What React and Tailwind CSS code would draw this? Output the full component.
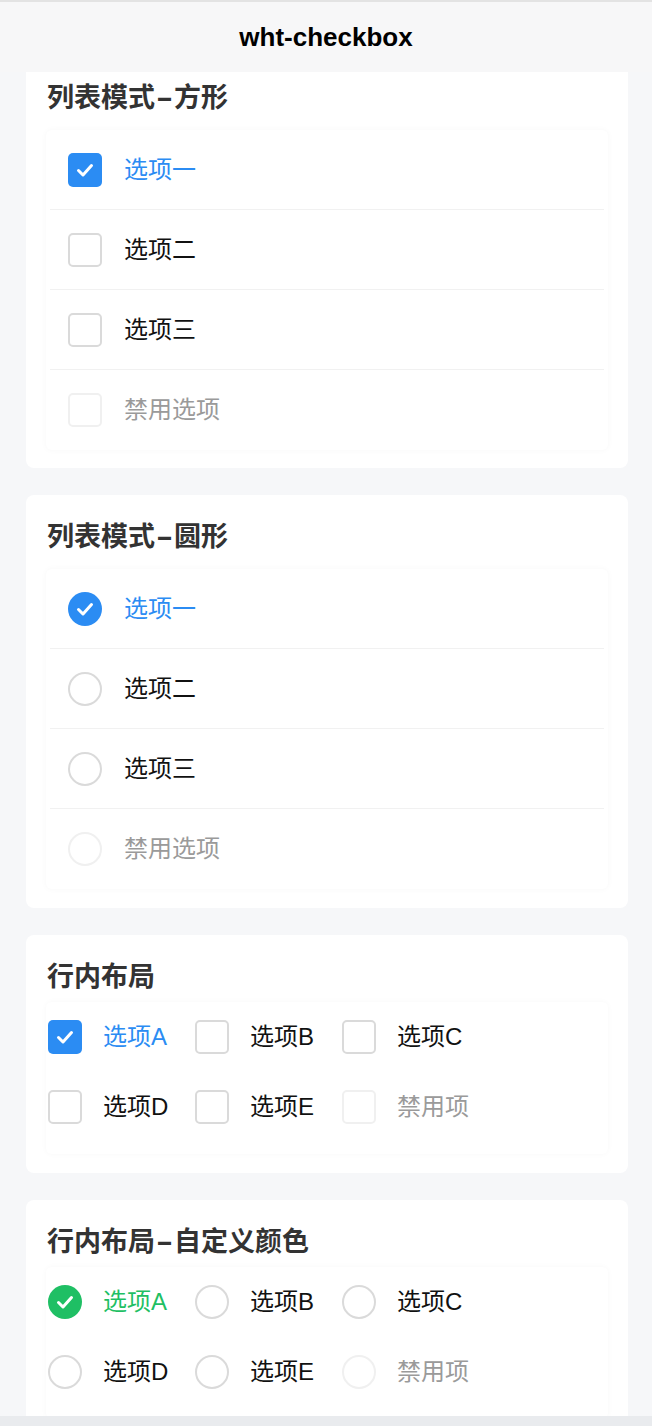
import React, { useState } from 'react';

const font = { fontFamily: '"Liberation Sans", "Noto Sans CJK SC", sans-serif' };

const Check = () => (
  <svg viewBox="0 0 34 34" className="w-[34px] h-[34px]">
    <polyline points="10.5,17.5 15,22 23.5,12.5" fill="none" stroke="#fff" strokeWidth="3" strokeLinecap="round" strokeLinejoin="round" />
  </svg>
);

const Box = ({ checked, disabled, round, color }) => {
  const shape = round ? 'rounded-full' : 'rounded-[5px]';
  if (checked) {
    return (
      <div className={`w-[34px] h-[34px] shrink-0 ${shape}`} style={{ backgroundColor: color }}>
        <Check />
      </div>
    );
  }
  return (
    <div
      className={`w-[34px] h-[34px] shrink-0 border-2 ${shape} ${disabled ? 'border-[#f0f0f0]' : 'border-[#dadada]'}`}
    />
  );
};

// title like "列表模式-方形": the dash is drawn wider, as in the CJK font
const Title = ({ text }) => {
  const parts = text.split('-');
  return (
    <h3 className="text-[27px] leading-[32px] font-semibold text-[#333] pl-[1px]">
      {parts[0]}
      {parts.length > 1 && <span className="inline-block mx-[5px] scale-x-[1.9]">-</span>}
      {parts[1]}
    </h3>
  );
};

const ListCard = ({ title, round }) => {
  const [values, setValues] = useState(['1']);
  const items = [
    { v: '1', label: '选项一' },
    { v: '2', label: '选项二' },
    { v: '3', label: '选项三' },
    { v: '4', label: '禁用选项', disabled: true },
  ];
  const toggle = (it) => {
    if (it.disabled) return;
    setValues(values.includes(it.v) ? values.filter(x => x !== it.v) : [...values, it.v]);
  };
  return (
    <div className="flex flex-col px-[20px]">
      <Title text={title} />
      <div className="mt-[16px] flex flex-col rounded-[6px] shadow-[0_0_6px_rgba(0,0,0,0.035)]">
        {items.map((it, i) => {
          const checked = values.includes(it.v);
          const last = i === items.length - 1;
          return (
            <div key={it.v} className={`mx-[4px] ${last ? '' : 'border-b border-[#f1f1f1]'}`}>
              <div
                onClick={() => toggle(it)}
                className={`${last ? 'h-[80px]' : 'h-[79px]'} flex items-center gap-[22px] pl-[18px] cursor-pointer`}
              >
                <Box checked={checked} disabled={it.disabled} round={round} color="#2b8cf3" />
                <span className={`text-[24px] ${checked ? 'text-[#2b8cf3]' : it.disabled ? 'text-[#9a9a9a]' : 'text-[#111]'}`}>
                  {it.label}
                </span>
              </div>
            </div>
          );
        })}
      </div>
    </div>
  );
};

const InlineCard = ({ title, round, color }) => {
  const [values, setValues] = useState(['A']);
  const items = [
    { v: 'A', label: '选项A' },
    { v: 'B', label: '选项B' },
    { v: 'C', label: '选项C' },
    { v: 'D', label: '选项D' },
    { v: 'E', label: '选项E' },
    { v: 'F', label: '禁用项', disabled: true },
  ];
  const toggle = (it) => {
    if (it.disabled) return;
    setValues(values.includes(it.v) ? values.filter(x => x !== it.v) : [...values, it.v]);
  };
  return (
    <div className="flex flex-col px-[20px]">
      <Title text={title} />
      <div className="mt-[9px] grid grid-cols-[147px_147px_147px] rounded-[6px] shadow-[0_0_6px_rgba(0,0,0,0.03)] pb-[12px]">
        {items.map((it) => {
          const checked = values.includes(it.v);
          return (
            <div
              key={it.v}
              onClick={() => toggle(it)}
              className="h-[70px] flex items-center gap-[21px] pl-[2px] cursor-pointer"
            >
              <Box checked={checked} disabled={it.disabled} round={round} color={color} />
              <span
                className={`text-[24px] ${it.disabled ? 'text-[#9a9a9a]' : 'text-[#111]'}`}
                style={checked ? { color } : undefined}
              >
                {it.label}
              </span>
            </div>
          );
        })}
      </div>
    </div>
  );
};

export default function App() {
  return (
    <div className="min-h-screen bg-[#f6f7f9] border-t-2 border-[#e3e3e3]" style={font}>
      <div className="h-[70px] flex items-center justify-center bg-[#f7f7f8]">
        <h1 className="text-[26px] font-bold text-black">wht-checkbox</h1>
      </div>
      <div className="flex flex-col gap-[27px] ml-[26px] w-[602px] pb-[20px]">
        <div className="bg-white rounded-b-[8px] pt-[10px] pb-[18px]">
          <ListCard title="列表模式-方形" />
        </div>
        <div className="bg-white rounded-[8px] pt-[26px] pb-[19px]">
          <ListCard title="列表模式-圆形" round />
        </div>
        <div className="bg-white rounded-[8px] pt-[26px] pb-[19px]">
          <InlineCard title="行内布局" color="#2b8cf3" />
        </div>
        <div className="bg-white rounded-[8px] pt-[26px] pb-[19px]">
          <InlineCard title="行内布局-自定义颜色" round color="#1fbf64" />
        </div>
      </div>
      <div className="fixed left-0 right-0 bottom-0 h-[10px] bg-[#e9ebee]" />
    </div>
  );
}
